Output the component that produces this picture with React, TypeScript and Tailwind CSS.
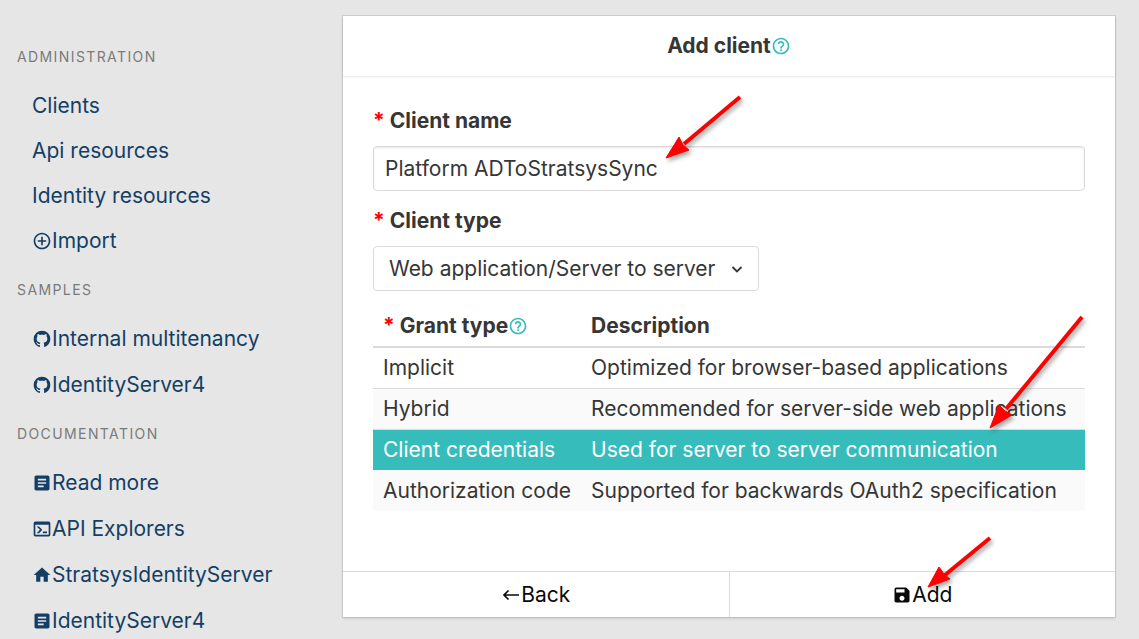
import type { ReactNode } from "react";
import { useState } from "react";
import {
  MdAddCircleOutline,
  MdArticle,
  MdHelpOutline,
  MdHome,
  MdSave,
} from "react-icons/md";

type IconProps = { className?: string };

function GithubIcon({ className }: IconProps) {
  return (
    <svg viewBox="0 0 24 24" fill="currentColor" className={className} aria-hidden="true">
      <path d="M12 2A10 10 0 0 0 2 12c0 4.42 2.87 8.17 6.84 9.5.5.08.66-.23.66-.5v-1.69c-2.77.6-3.36-1.34-3.36-1.34-.46-1.16-1.11-1.47-1.11-1.47-.91-.62.07-.6.07-.6 1 .07 1.53 1.03 1.53 1.03.87 1.52 2.34 1.07 2.91.83.09-.65.35-1.09.63-1.34-2.22-.25-4.55-1.11-4.55-4.92 0-1.11.38-2 1.03-2.71-.1-.25-.45-1.29.1-2.64 0 0 .84-.27 2.75 1.02.79-.22 1.65-.33 2.5-.33s1.71.11 2.5.33c1.91-1.29 2.75-1.02 2.75-1.02.55 1.35.2 2.39.1 2.64.65.71 1.03 1.6 1.03 2.71 0 3.82-2.34 4.66-4.57 4.91.36.31.69.92.69 1.85V21c0 .27.16.59.67.5C19.14 20.16 22 16.42 22 12A10 10 0 0 0 12 2Z" />
    </svg>
  );
}

function ConsoleIcon({ className }: IconProps) {
  return (
    <svg viewBox="0 0 24 24" fill="currentColor" className={className} aria-hidden="true">
      <path d="M20 19V7H4v12h16m0-16a2 2 0 0 1 2 2v14a2 2 0 0 1-2 2H4a2 2 0 0 1-2-2V5a2 2 0 0 1 2-2h16m-7 14v-2h5v2h-5m-3.42-4L5.57 9H8.4l3.3 3.3c.39.39.39 1.03 0 1.42L8.42 17H5.59l3.99-4Z" />
    </svg>
  );
}

function BackIcon({ className }: IconProps) {
  return (
    <svg viewBox="0 0 20 20" fill="none" stroke="currentColor" strokeWidth="1.7" className={className} aria-hidden="true">
      <path d="M18 10H3M7.5 5.5 3 10l4.500 4.500" />
    </svg>
  );
}

function NavGroup({ title, children }: { title: string; children: ReactNode }) {
  return (
    <section>
      <h2 className="pl-[17px] text-sm leading-5 tracking-widest text-[#7a7a7a] uppercase">{title}</h2>
      <ul className="py-4 pl-8">{children}</ul>
    </section>
  );
}

function NavItem({ icon, children }: { icon?: ReactNode; children: ReactNode }) {
  return (
    <li>
      <a
        href="#"
        className={
          icon
            ? "flex h-[46px] items-center whitespace-nowrap hover:underline"
            : "flex h-[45px] items-center whitespace-nowrap hover:underline"
        }
      >
        {icon}
        {children}
      </a>
    </li>
  );
}

function Required() {
  return <span className="text-[#ff0000]">*</span>;
}

const grants = [
  ["Implicit", "Optimized for browser-based applications"],
  ["Hybrid", "Recommended for server-side web applications"],
  ["Client credentials", "Used for server to server communication"],
  ["Authorization code", "Supported for backwards OAuth2 specification"],
];

const arrows = [
  { line: "M740 97 684 144", head: "666,158 679,137 683,145 689,150" },
  { line: "M1082 317 1006 409", head: "990,428 999,405 1005,411 1012,415" },
  { line: "M990 538 945 575", head: "928,587 939,567 944,574 950,579" },
];

export default function App() {
  const [name, setName] = useState("Platform ADToStratsysSync");
  const [selected, setSelected] = useState("Client credentials");
  const icon = "size-5 shrink-0";

  return (
    <div className="relative flex h-screen overflow-hidden bg-[#e6e6e6] font-['Inter',sans-serif] text-[21px] leading-[30px] text-[#363636]">
      <nav className="w-[342px] shrink-0 pt-[47px] text-[#143f65]">
        <NavGroup title="Administration">
          <NavItem>Clients</NavItem>
          <NavItem>Api resources</NavItem>
          <NavItem>Identity resources</NavItem>
          <NavItem icon={<MdAddCircleOutline className={icon} />}>Import</NavItem>
        </NavGroup>
        <NavGroup title="Samples">
          <NavItem icon={<GithubIcon className={icon} />}>Internal multitenancy</NavItem>
          <NavItem icon={<GithubIcon className={icon} />}>IdentityServer4</NavItem>
        </NavGroup>
        <NavGroup title="Documentation">
          <NavItem icon={<MdArticle className={icon} />}>Read more</NavItem>
          <NavItem icon={<ConsoleIcon className={icon} />}>API Explorers</NavItem>
          <NavItem icon={<MdHome className={icon} />}>StratsysIdentityServer</NavItem>
          <NavItem icon={<MdArticle className={icon} />}>IdentityServer4</NavItem>
        </NavGroup>
      </nav>

      <main className="min-w-0 flex-1 pt-4 pr-6 pl-px">
        <form
          className="bg-white shadow-[0_2px_3px_rgba(10,10,10,0.1),0_0_0_1px_rgba(10,10,10,0.1)]"
          onSubmit={(e) => e.preventDefault()}
        >
          <header className="flex h-[60px] items-center justify-center shadow-[0_1px_2px_rgba(10,10,10,0.1)]">
            <h1 className="font-bold">Add client</h1>
            <MdHelpOutline className="size-5 text-[#37bcbc]" />
          </header>

          <div className="px-[30px] pt-[30px] pb-[60px]">
            <label htmlFor="client-name" className="block font-bold">
              <Required /> Client name
            </label>
            <input
              id="client-name"
              value={name}
              onChange={(e) => setName(e.target.value)}
              className="mt-2.5 block h-[45px] w-full rounded-[4px] border border-[#dbdbdb] px-[11px] shadow-[inset_0_1px_2px_rgba(10,10,10,0.1)]"
            />

            <label htmlFor="client-type" className="mt-[15px] block font-bold">
              <Required /> Client type
            </label>
            <div className="relative mt-2.5 w-[386px]">
              <select
                id="client-type"
                className="h-[45px] w-full appearance-none rounded-[4px] border border-[#dbdbdb] bg-white px-[15px]"
              >
                <option>Web application/Server to server</option>
              </select>
              <svg
                viewBox="0 0 12 12"
                fill="none"
                stroke="currentColor"
                strokeWidth="1.800"
                className="pointer-events-none absolute top-[17px] right-4 size-3"
                aria-hidden="true"
              >
                <path d="M1.500 4 6 8.500 10.500 4" />
              </svg>
            </div>

            <table className="mt-[15px] w-full border-collapse text-left whitespace-nowrap">
              <thead>
                <tr className="border-b-2 border-[#dbdbdb]">
                  <th className="w-[208px] px-2.5 py-[5px] font-bold">
                    <span className="flex items-center">
                      <span>
                        <Required /> Grant type
                      </span>
                      <MdHelpOutline className="size-5 text-[#37bcbc]" />
                    </span>
                  </th>
                  <th className="px-2.5 py-[5px] font-bold">Description</th>
                </tr>
              </thead>
              <tbody>
                {grants.map(([grant, description]) => (
                  <tr
                    key={grant}
                    onClick={() => setSelected(grant)}
                    className={
                      grant === selected
                        ? "cursor-pointer border-b border-white bg-[#37bcbc] text-white"
                        : "cursor-pointer border-b border-[#dbdbdb] last:border-0 even:bg-[#fafafa]"
                    }
                  >
                    <td className="px-2.5 py-[5px]">{grant}</td>
                    <td className="px-2.5 py-[5px]">{description}</td>
                  </tr>
                ))}
              </tbody>
            </table>
          </div>

          <footer className="flex h-[46px] border-t border-[#dbdbdb] text-[#0a0a0a]">
            <button type="button" className="flex flex-1 items-center justify-center border-r border-[#dbdbdb]">
              <BackIcon className={icon} />
              Back
            </button>
            <button type="submit" className="flex flex-1 items-center justify-center">
              <MdSave className={icon} />
              Add
            </button>
          </footer>
        </form>
      </main>

      <svg
        viewBox="0 0 1139 639"
        className="pointer-events-none absolute top-0 left-0 w-[1139px] drop-shadow-[2px_3px_2px_rgba(0,0,0,0.35)]"
        aria-hidden="true"
      >
        {arrows.map((arrow) => (
          <g key={arrow.line} fill="#ff0000" stroke="#ff0000">
            <path d={arrow.line} strokeWidth="4" />
            <polygon points={arrow.head} strokeWidth="1" />
          </g>
        ))}
      </svg>
    </div>
  );
}
